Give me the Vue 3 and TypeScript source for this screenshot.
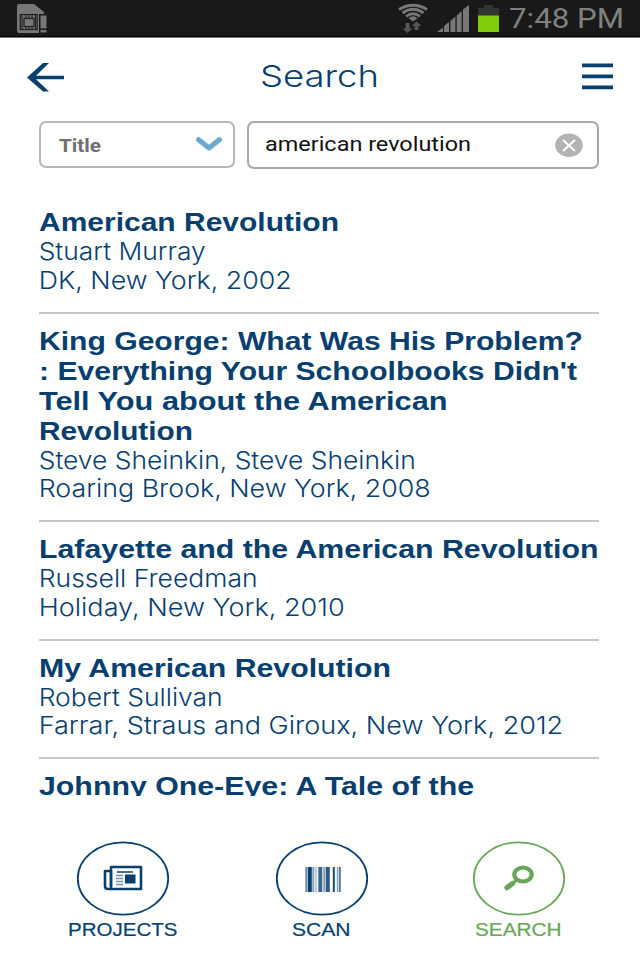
<script setup lang="ts">
interface Line { text: string; width: number }
interface Book { title: Line[]; details: Line[] }

const books: Book[] = [
  {
    title: [{ text: 'American Revolution', width: 300 }],
    details: [{ text: 'Stuart Murray', width: 167 }, { text: 'DK, New York, 2002', width: 253 }],
  },
  {
    title: [
      { text: 'King George: What Was His Problem?', width: 544 },
      { text: ": Everything Your Schoolbooks Didn't", width: 538 },
      { text: 'Tell You about the American', width: 408.5 },
      { text: 'Revolution', width: 154 },
    ],
    details: [{ text: 'Steve Sheinkin, Steve Sheinkin', width: 377 }, { text: 'Roaring Brook, New York, 2008', width: 392 }],
  },
  {
    title: [{ text: 'Lafayette and the American Revolution', width: 559.5 }],
    details: [{ text: 'Russell Freedman', width: 219 }, { text: 'Holiday, New York, 2010', width: 306 }],
  },
  {
    title: [{ text: 'My American Revolution', width: 352 }],
    details: [{ text: 'Robert Sullivan', width: 184 }, { text: 'Farrar, Straus and Giroux, New York, 2012', width: 524.5 }],
  },
  { title: [{ text: 'Johnny One-Eye: A Tale of the', width: 435 }], details: [] },
]

const bars = [
  { x: 29.5, w: 2, o: 0.6 }, { x: 32, w: 4, o: 1 }, { x: 36.5, w: 2, o: 0.5 }, { x: 39.5, w: 1.5, o: 0.35 },
  { x: 42.5, w: 4, o: 0.8 }, { x: 47.5, w: 2, o: 0.5 }, { x: 50, w: 4, o: 0.85 },
  { x: 57, w: 2, o: 0.95 }, { x: 61, w: 1.3, o: 0.5 }, { x: 63, w: 2, o: 0.7 },
]
</script>

<template>
  <main class="phone">
    <div class="status">
      <svg class="sim" width="32" height="33" viewBox="0 0 32 33">
        <path d="M3 4h15l10 8v3h-4v18H3a2 2 0 0 1-2-2V6a2 2 0 0 1 2-2z" fill="#777" />
        <g fill="none" stroke="#222" stroke-width="1.2">
          <rect x="4.2" y="14.5" width="17" height="15" /><rect x="8" y="18.5" width="10" height="8" />
          <path d="M6 15v14M19.5 15v14M10 15v3M13 15v3M16 15v3M10 27v3M13 27v3M16 27v3" />
        </g>
        <rect x="23" y="14" width="9" height="20" fill="#191919" />
        <path d="M24.5 15.5h6v13h-6zM24.5 30h6v2.5h-6z" fill="#777" />
      </svg>
      <svg class="wifi" width="30" height="33" viewBox="0 0 30 33">
        <g fill="none" stroke="#777" stroke-width="2.8">
          <path d="M1 9.500Q15 1 29 9.500M4.500 13Q15 5.500 25.500 13M8 16.500Q15 11 22 16.500" />
        </g>
        <path d="M10.500 18.200Q15 14.500 19.500 18.200L15 21.500z" fill="#777" />
        <path d="M7.500 23h4v5.500h3L9.500 33l-5-4.500h3zM16.500 30v-4h-3l5-4.500 5 4.500h-3v4z" fill="#555" />
      </svg>
      <svg class="signal" width="34" height="32" viewBox="0 0 34 32">
        <path d="M0 32L6 27.500V32zM7 26l5-4v10H7zM13.400 21l5-4.500V32h-5zM19.700 15.500l5-4.500v21h-5zM26 9.500L32 5v27h-6z" fill="#777" />
      </svg>
      <svg class="battery" width="21" height="32" viewBox="0 0 21 32">
        <path d="M6 5h9v3h6v8H0V8h6z" fill="#333" /><rect y="15.500" width="21" height="16.500" fill="#80cc0a" />
      </svg>
      <svg class="clock" width="116" height="36">
        <text x="0" y="28" textLength="115" lengthAdjust="spacingAndGlyphs">7:48 PM</text>
      </svg>
    </div>

    <header class="header">
      <svg width="38" height="32" viewBox="0 0 38 32">
        <path d="M0 16.500L16 2h6L9 14.700h28v3.600H9L22 30.500h-6z" fill="#07406f" />
      </svg>
      <svg class="heading" width="120" height="50">
        <text x="0" y="35" textLength="119" lengthAdjust="spacingAndGlyphs">Search</text>
      </svg>
      <svg width="31" height="28" viewBox="0 0 31 28">
        <path d="M0 .500h31v3.800H0zM0 11.500h31v3.800H0zM0 22.500h31v3.800H0z" fill="#07406f" />
      </svg>
    </header>

    <section class="filters">
      <div class="select">
        <svg class="kind" width="43" height="44"><text x="0" y="28.500" textLength="42" lengthAdjust="spacingAndGlyphs">Title</text></svg>
        <svg width="26" height="16" viewBox="0 0 26 16">
          <path d="M2.700 2.700L13 11 23.300 2.700" fill="none" stroke="#6fa9cf" stroke-width="5.200" stroke-linecap="round" stroke-linejoin="round" />
        </svg>
      </div>
      <div class="query">
        <svg class="term" width="208" height="44"><text x="0" y="28" textLength="206" lengthAdjust="spacingAndGlyphs">american revolution</text></svg>
        <svg width="28" height="25" viewBox="0 0 28 25">
          <ellipse cx="14" cy="12.200" rx="13.800" ry="11.700" fill="#b3b3b3" />
          <path d="M8 7L20 18M20 7L8 18" stroke="#fff" stroke-width="2" />
        </svg>
      </div>
    </section>

    <section class="results">
      <article v-for="book in books" :key="book.title[0].text" class="book">
        <svg v-for="line in book.title" :key="line.text" class="title" width="561" height="30">
          <text x="1" y="21.700" :textLength="line.width" lengthAdjust="spacingAndGlyphs">{{ line.text }}</text>
        </svg>
        <svg v-for="line in book.details" :key="line.text" class="detail" width="561" height="28.5">
          <text x="0.7" y="20.700" :textLength="line.width" lengthAdjust="spacingAndGlyphs">{{ line.text }}</text>
        </svg>
      </article>
    </section>

    <nav class="nav">
      <div class="tab">
        <svg width="94" height="76" viewBox="0 0 94 76">
          <ellipse cx="47" cy="38.500" rx="45.200" ry="36.200" class="ring" />
          <path d="M35 27h30v22H32q-3 0-3-3V31h6v16" fill="none" stroke="#07406f" stroke-width="2.600" stroke-linejoin="round" />
          <path d="M35 26v22" stroke="#07406f" stroke-width="2.400" />
          <path d="M41 32h16" stroke="#07406f" stroke-width="1.500" />
          <path d="M40 35.500h7M40 38.500h7M40 41.500h7M40 44.500h7" stroke="#6f93ad" stroke-width="1.300" />
          <rect x="49" y="34.500" width="10.500" height="9" fill="#07406f" />
        </svg>
        <svg class="label" width="110" height="28"><text x="0" y="19.500" textLength="109.500" lengthAdjust="spacingAndGlyphs">PROJECTS</text></svg>
      </div>
      <div class="tab">
        <svg width="94" height="76" viewBox="0 0 94 76">
          <ellipse cx="47" cy="38.500" rx="45.200" ry="36.200" class="ring" />
          <rect v-for="bar in bars" :key="bar.x" :x="bar.x + 0.800" y="27" :width="bar.w" height="25" :opacity="bar.o" fill="#07406f" />
        </svg>
        <svg class="label" width="60" height="28"><text x="0" y="19.500" textLength="58.500" lengthAdjust="spacingAndGlyphs">SCAN</text></svg>
      </div>
      <div class="tab active">
        <svg width="94" height="76" viewBox="0 0 94 76">
          <ellipse cx="47" cy="38.500" rx="45.200" ry="36.200" class="ring" />
          <ellipse cx="51" cy="34.500" rx="8.700" ry="7" fill="none" stroke="#69a657" stroke-width="4.200" />
          <path d="M44 40.500L41 43.500" stroke="#69a657" stroke-width="3" />
          <path d="M40.500 43.500L35 47.600" stroke="#69a657" stroke-width="5.200" stroke-linecap="round" />
        </svg>
        <svg class="label" width="87" height="28"><text x="0" y="19.500" textLength="86.500" lengthAdjust="spacingAndGlyphs">SEARCH</text></svg>
      </div>
    </nav>
  </main>
</template>

<style>
body { background: #fff; }
</style>

<style scoped>
.phone { width: 640px; height: 960px; overflow: hidden; background: #fff; box-sizing: border-box; }
svg { display: block; flex: none; }
.status { height: 38px; box-sizing: border-box; background: #191919; border-bottom: 1px solid #777; box-shadow: inset 0 -1px #000; display: flex; align-items: flex-start; padding-left: 16px; }
.wifi { margin-left: 350px; }
.signal { margin-left: 9px; }
.battery { margin-left: 7px; }
.clock { margin-left: 10px; }
.clock text { font: 27px Roboto, sans-serif; fill: #808080; }
.header { height: 77px; display: flex; align-items: center; justify-content: space-between; padding: 0 27px; }
.heading { margin-left: -8px; }
.heading text { font: 300 30px Inter, "Liberation Sans", sans-serif; fill: #07406f; }
.filters { display: flex; gap: 12px; padding: 6px 40px 0 39px; height: 50px; box-sizing: border-box; align-items: flex-start; }
.select, .query { box-sizing: border-box; border: 2px solid #b8b8b8; border-radius: 7px; display: flex; align-items: center; justify-content: space-between; }
.select { width: 196px; height: 47px; padding: 0 11px 0 18px; }
.query { width: 352px; height: 48px; border-color: #a8a8a8; padding: 0 14px 0 16px; }
.kind text { font: bold 19px Roboto, sans-serif; fill: #707070; }
.term text { font: 21px Roboto, sans-serif; fill: #111; }
.results { margin: 30px 41px 0 38px; height: 600.5px; overflow: hidden; }
.book { padding: 14px 0 15.5px; border-bottom: 2px solid #c8c8c8; margin-left: 1px; }
.book:last-child { border-bottom: 0; }
.title, .detail { margin-left: -1px; overflow: visible; }
.title text { font: bold 25px "Liberation Sans", sans-serif; fill: #07406f; }
.detail text { font: 300 24px Inter, "Liberation Sans", sans-serif; fill: #07406f; }
.nav { display: grid; grid-template-columns: 199px 199px 196px; padding: 44px 0 0 23px; color: #07406f; }
.tab { display: flex; flex-direction: column; align-items: center; }
.tab:last-child { margin-left: -1px; }
.ring { fill: none; stroke: currentColor; stroke-width: 1.800; }
.label text { font: 19px "Liberation Sans", sans-serif; fill: currentColor; stroke: currentColor; stroke-width: 0.2; }
.tab:last-child .label { margin-left: -1px; }
.active { color: #69a657; }
</style>
